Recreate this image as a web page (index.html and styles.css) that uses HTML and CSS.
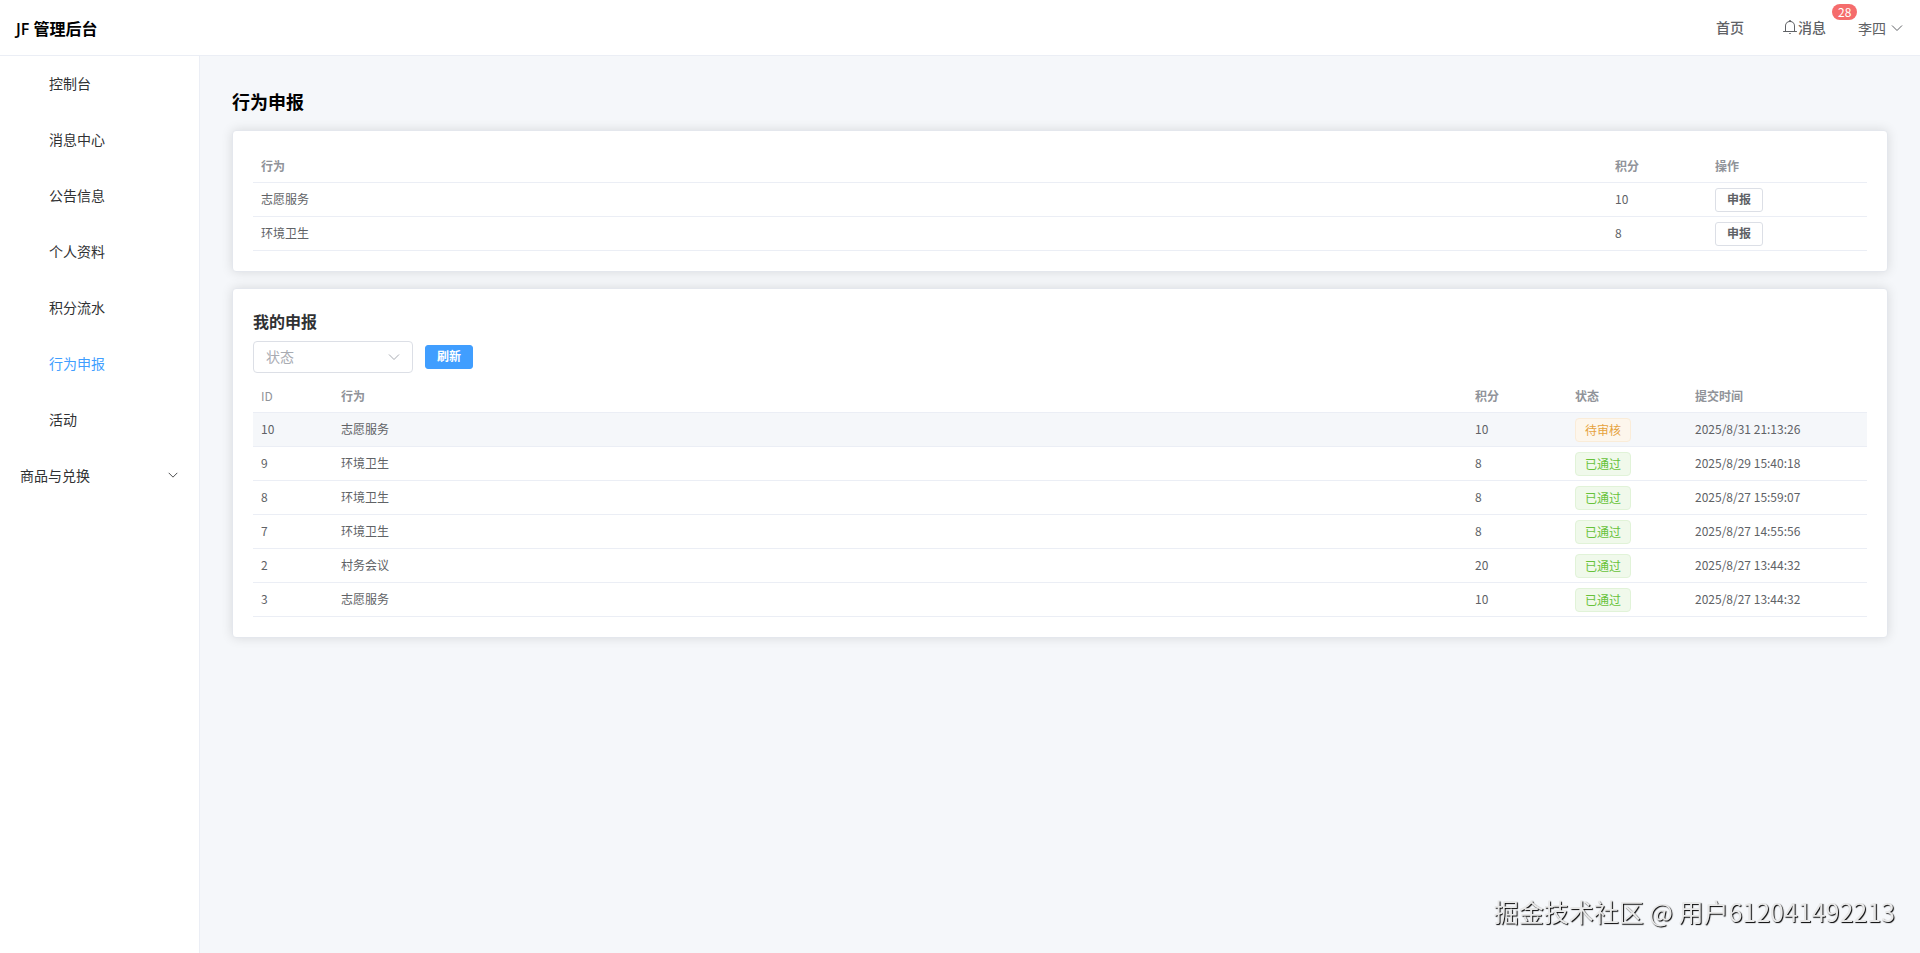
FILE: index.html
```html
<!DOCTYPE html>
<html lang="zh-CN">
<head>
    <meta charset="UTF-8">
    <title>JF 管理后台</title>
    <link rel="stylesheet" href="styles.css">
</head>
<body>

<header class="header">
    <div class="logo">JF 管理后台</div>
    <nav class="header-nav">
        <a href="#" class="nav-link">首页</a>
        <a href="#" class="nav-link message">
            <svg class="icon-bell" viewBox="0 0 1024 1024" fill="currentColor" aria-hidden="true">
                <path d="M512 64a64 64 0 0 1 64 64v64H448v-64a64 64 0 0 1 64-64z"/>
                <path d="M256 768h512V448a256 256 0 1 0-512 0v320zm256-640a320 320 0 0 1 320 320v384H192V448a320 320 0 0 1 320-320z"/>
                <path d="M96 768h832q32 0 32 32t-32 32H96q-32 0-32-32t32-32zm352 128h128a64 64 0 0 1-128 0z"/>
            </svg>消息
            <span class="badge">28</span>
        </a>
        <button type="button" class="user">
            李四
            <svg class="icon-arrow" viewBox="0 0 14 14" aria-hidden="true"><path d="M2 4.5l5 5 5-5"/></svg>
        </button>
    </nav>
</header>

<div class="layout">
    <aside class="sidebar">
        <a href="#" class="menu-item">控制台</a>
        <a href="#" class="menu-item">消息中心</a>
        <a href="#" class="menu-item">公告信息</a>
        <a href="#" class="menu-item">个人资料</a>
        <a href="#" class="menu-item">积分流水</a>
        <a href="#" class="menu-item active">行为申报</a>
        <a href="#" class="menu-item">活动</a>
        <button type="button" class="menu-title">
            商品与兑换
            <svg class="icon-arrow" viewBox="0 0 14 14" aria-hidden="true"><path d="M2 4.5l5 5 5-5"/></svg>
        </button>
    </aside>

    <main class="main">
        <h1 class="page-title">行为申报</h1>

        <section class="card">
            <table>
                <colgroup>
                    <col>
                    <col class="col-points">
                    <col class="col-action">
                </colgroup>
                <thead>
                <tr>
                    <th>行为</th>
                    <th>积分</th>
                    <th>操作</th>
                </tr>
                </thead>
                <tbody>
                <tr>
                    <td>志愿服务</td>
                    <td>10</td>
                    <td class="cell-box"><button type="button" class="btn">申报</button></td>
                </tr>
                <tr>
                    <td>环境卫生</td>
                    <td>8</td>
                    <td class="cell-box"><button type="button" class="btn">申报</button></td>
                </tr>
                </tbody>
            </table>
        </section>

        <section class="card">
            <h2 class="card-title">我的申报</h2>
            <div class="toolbar">
                <div class="select">
                    <select aria-label="状态">
                        <option value="">状态</option>
                        <option>待审核</option>
                        <option>已通过</option>
                    </select>
                    <svg class="icon-arrow" viewBox="0 0 14 14" aria-hidden="true"><path d="M2 4.5l5 5 5-5"/></svg>
                </div>
                <button type="button" class="btn btn-primary">刷新</button>
            </div>
            <table>
                <colgroup>
                    <col class="col-id">
                    <col>
                    <col class="col-points">
                    <col class="col-status">
                    <col class="col-time">
                </colgroup>
                <thead>
                <tr>
                    <th class="th-id">ID</th>
                    <th>行为</th>
                    <th>积分</th>
                    <th>状态</th>
                    <th>提交时间</th>
                </tr>
                </thead>
                <tbody>
                <tr class="current">
                    <td>10</td>
                    <td>志愿服务</td>
                    <td>10</td>
                    <td class="cell-box"><span class="tag tag-warning">待审核</span></td>
                    <td>2025/8/31 21:13:26</td>
                </tr>
                <tr>
                    <td>9</td>
                    <td>环境卫生</td>
                    <td>8</td>
                    <td class="cell-box"><span class="tag tag-success">已通过</span></td>
                    <td>2025/8/29 15:40:18</td>
                </tr>
                <tr>
                    <td>8</td>
                    <td>环境卫生</td>
                    <td>8</td>
                    <td class="cell-box"><span class="tag tag-success">已通过</span></td>
                    <td>2025/8/27 15:59:07</td>
                </tr>
                <tr>
                    <td>7</td>
                    <td>环境卫生</td>
                    <td>8</td>
                    <td class="cell-box"><span class="tag tag-success">已通过</span></td>
                    <td>2025/8/27 14:55:56</td>
                </tr>
                <tr>
                    <td>2</td>
                    <td>村务会议</td>
                    <td>20</td>
                    <td class="cell-box"><span class="tag tag-success">已通过</span></td>
                    <td>2025/8/27 13:44:32</td>
                </tr>
                <tr>
                    <td>3</td>
                    <td>志愿服务</td>
                    <td>10</td>
                    <td class="cell-box"><span class="tag tag-success">已通过</span></td>
                    <td>2025/8/27 13:44:32</td>
                </tr>
                </tbody>
            </table>
        </section>
    </main>
</div>

<div class="watermark">掘金技术社区 @ 用户612041492213</div>

</body>
</html>
```
FILE: styles.css
```css
* {
    box-sizing: border-box;
}

body {
    margin: 0;
    min-height: 100vh;
    display: flex;
    flex-direction: column;
    font-family: "Noto Sans CJK SC", sans-serif;
    font-size: 14px;
    color: #303133;
    background: #f5f7fa;
}

a {
    color: inherit;
    text-decoration: none;
}

button, select {
    font-family: inherit;
    cursor: pointer;
}

.header {
    height: 56px;
    padding: 0 16px;
    display: flex;
    align-items: center;
    justify-content: space-between;
    background: #fff;
    border-bottom: 1px solid #ebeef5;
}

.logo {
    font-family: "Open Sans", "Noto Sans CJK SC", sans-serif;
    font-size: 16px;
    font-weight: 600;
    color: #000;
}

.header-nav {
    display: flex;
    align-items: center;
    color: #606266;
}

.nav-link {
    margin-right: 32px;
    padding-bottom: 2px;
    font-weight: 500;
}

.message {
    position: relative;
    display: flex;
    align-items: center;
    margin-left: 6px;
}

.icon-bell {
    width: 16px;
    height: 16px;
}

.badge {
    position: absolute;
    top: -13px;
    left: 50px;
    height: 16px;
    padding: 0 6px;
    border-radius: 8px;
    background: #f56c6c;
    color: #fff;
    font-size: 12px;
    font-weight: normal;
    line-height: 16px;
}

.user {
    display: flex;
    align-items: center;
    gap: 4px;
    padding: 0;
    border: none;
    background: none;
    font-size: 14px;
    color: #606266;
}

.icon-arrow {
    width: 14px;
    height: 14px;
    fill: none;
    stroke: currentColor;
    stroke-width: 1;
}

.layout {
    flex: 1;
    display: flex;
}

.sidebar {
    width: 200px;
    background: #fff;
    border-right: 1px solid #ebeef5;
}

.menu-item {
    display: block;
    padding: 0 0 2px 49px;
    line-height: 54px;
}

.menu-item.active {
    color: #409eff;
}

.menu-title {
    width: 100%;
    height: 56px;
    padding: 0 20px 2px;
    display: flex;
    align-items: center;
    justify-content: space-between;
    border: none;
    background: none;
    font-size: 14px;
    color: #303133;
}

.menu-title .icon-arrow {
    width: 12px;
    height: 12px;
}

.main {
    flex: 1;
    padding: 32px;
}

.page-title {
    margin: 0 0 16px;
    font-size: 18px;
    line-height: 26px;
    color: #000;
}

.card {
    padding: 20px;
    margin-bottom: 16px;
    background: #fff;
    border: 1px solid #e4e7ed;
    border-radius: 4px;
    box-shadow: 0 0 12px rgba(0,0,0,0.12);
}

.card-title {
    margin: 0 0 8px;
    font-size: 16px;
    line-height: 24px;
}

.toolbar {
    display: flex;
    align-items: center;
    gap: 12px;
    margin-bottom: 8px;
}

.select {
    position: relative;
    width: 160px;
    height: 32px;
}

.select select {
    width: 100%;
    height: 100%;
    padding: 0 12px 2px;
    appearance: none;
    border: 1px solid #dcdfe6;
    border-radius: 4px;
    background: #fff;
    font-size: 14px;
    color: #a8abb2;
}

.select .icon-arrow {
    position: absolute;
    top: 9px;
    right: 12px;
    color: #a8abb2;
    pointer-events: none;
}

.btn {
    display: block;
    height: 24px;
    padding: 0 11px 2px;
    border: 1px solid #dcdfe6;
    border-radius: 3px;
    background: #fff;
    font-size: 12px;
    font-weight: bold;
    line-height: 20px;
    color: #606266;
}

.btn-primary {
    background: #409eff;
    border-color: #409eff;
    color: #fff;
}

table {
    width: 100%;
    table-layout: fixed;
    border-collapse: separate;
    border-spacing: 0;
    font-size: 12px;
    color: #606266;
}

th, td {
    height: 34px;
    padding: 0 8px 2px;
    text-align: left;
    border-bottom: 1px solid #ebeef5;
}

th {
    height: 32px;
    color: #909399;
}

.th-id {
    font-weight: normal;
}

.cell-box {
    padding-bottom: 0;
}

.current td {
    background: #f5f7fa;
}

.col-id {
    width: 80px;
}

.col-points {
    width: 100px;
}

.col-action {
    width: 160px;
}

.col-status {
    width: 120px;
}

.col-time {
    width: 180px;
}

.tag {
    display: block;
    width: fit-content;
    height: 24px;
    padding: 0 9px;
    border: 1px solid;
    border-radius: 4px;
    line-height: 22px;
}

.tag-warning {
    color: #e6a23c;
    background: #fdf6ec;
    border-color: #faecd8;
}

.tag-success {
    color: #67c23a;
    background: #f0f9eb;
    border-color: #e1f3d8;
}

.watermark {
    position: fixed;
    right: 25px;
    bottom: 24px;
    font-size: 25px;
    color: #e8e8e8;
    text-shadow: 1px 1px 1px #000;
    pointer-events: none;
}
```
